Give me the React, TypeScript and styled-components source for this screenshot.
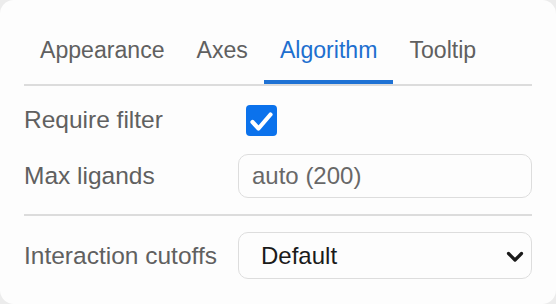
import React from 'react'
import styled, { createGlobalStyle } from 'styled-components'

const GlobalStyle = createGlobalStyle`
  html, body {
    margin: 0;
    padding: 0;
    background: #ececec;
  }
  body {
    font-family: "Liberation Sans", Arial, sans-serif;
  }
`

const Panel = styled.div`
  width: 556px;
  height: 304px;
  box-sizing: border-box;
  padding: 24px 24px 0;
  background: #fdfdfd;
  border-radius: 14px;
  overflow: hidden;
`

const TabBar = styled.div`
  display: flex;
  border-bottom: 2px solid #dcdcdc;
`

const Tab = styled.div<{ $active?: boolean }>`
  padding: 13px 16px 16px;
  font-size: 23.1px;
  line-height: 27px;
  color: ${(p) => (p.$active ? '#1e6fcf' : '#606060')};
  border-bottom: 4px solid ${(p) => (p.$active ? '#1f72d4' : 'transparent')};
  white-space: nowrap;
`

const Section = styled.div<{ $top: number; $bottom: number; $divider?: boolean }>`
  display: flex;
  flex-direction: column;
  gap: 12px;
  padding: ${(p) => p.$top}px 0 ${(p) => p.$bottom}px;
  border-bottom: ${(p) => (p.$divider ? '2px solid #dcdcdc' : 'none')};
`

const Row = styled.div<{ $height: number }>`
  display: grid;
  grid-template-columns: 214px 1fr;
  align-items: center;
  height: ${(p) => p.$height}px;
`

const Label = styled.div`
  font-size: 24.5px;
  line-height: 28px;
  color: #606060;
  white-space: nowrap;
`

const CheckBox = styled.div`
  width: 31px;
  height: 31px;
  margin-left: 8px;
  border-radius: 4px;
  background: #0b72ec;
  display: flex;
  align-items: center;
  justify-content: center;
`

const TextInput = styled.input`
  box-sizing: border-box;
  width: 294px;
  height: 44px;
  padding: 0 13px;
  border: 1.5px solid #dddddd;
  border-radius: 10px;
  background: #fdfdfd;
  font-family: "Liberation Sans", Arial, sans-serif;
  font-size: 24px;
  color: #222;
  outline: none;

  &::placeholder {
    color: #686868;
  }
`

const SelectWrap = styled.div`
  position: relative;
  width: 294px;
  height: 47px;
`

const Select = styled.select`
  appearance: none;
  box-sizing: border-box;
  width: 100%;
  height: 100%;
  padding: 0 22px;
  border: 1.5px solid #dddddd;
  border-radius: 10px;
  background: #fdfdfd;
  font-family: "Liberation Sans", Arial, sans-serif;
  font-size: 24px;
  color: #1a1a1a;
  outline: none;
`

const Chevron = styled.svg`
  position: absolute;
  right: 8px;
  top: 19px;
  pointer-events: none;
`

const tabs = ['Appearance', 'Axes', 'Algorithm', 'Tooltip']

export default function App() {
  return (
    <>
      <GlobalStyle />
      <Panel>
        <TabBar>
          {tabs.map((t) => (
            <Tab key={t} $active={t === 'Algorithm'}>
              {t}
            </Tab>
          ))}
        </TabBar>
        <Section $top={12} $bottom={16} $divider>
          <Row $height={44}>
            <Label>Require filter</Label>
            <CheckBox>
              <svg width="31" height="31" viewBox="0 0 31 31">
                <polyline
                  points="6.5,17 12.5,23.5 24.5,9.5"
                  fill="none"
                  stroke="#fff"
                  strokeWidth="4.2"
                  strokeLinecap="round"
                  strokeLinejoin="round"
                />
              </svg>
            </CheckBox>
          </Row>
          <Row $height={44}>
            <Label>Max ligands</Label>
            <TextInput type="text" placeholder="auto (200)" />
          </Row>
        </Section>
        <Section $top={16} $bottom={0}>
          <Row $height={47}>
            <Label>Interaction cutoffs</Label>
            <SelectWrap>
              <Select defaultValue="default">
                <option value="default">Default</option>
              </Select>
              <Chevron width="18" height="12" viewBox="0 0 18 12">
                <polyline
                  points="2.5,2.5 9,9 15.5,2.5"
                  fill="none"
                  stroke="#1a1a1a"
                  strokeWidth="3.2"
                  strokeLinecap="round"
                  strokeLinejoin="round"
                />
              </Chevron>
            </SelectWrap>
          </Row>
        </Section>
      </Panel>
    </>
  )
}
